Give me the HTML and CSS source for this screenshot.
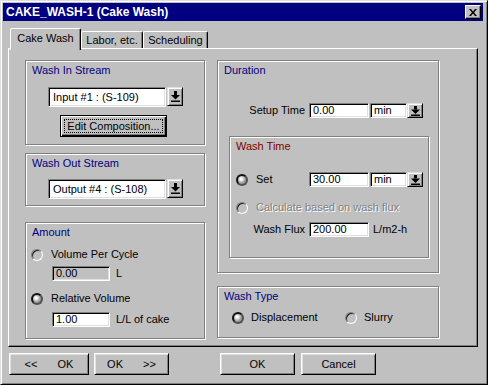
FILE: index.html
```html
<!DOCTYPE html>
<html>
<head>
<meta charset="utf-8">
<link rel="stylesheet" href="styles.css">
</head>
<body>
<div class="window">
  <div class="titlebar">
    <span class="title">CAKE_WASH-1 (Cake Wash)</span>
    <div class="close"><svg width="8" height="7" viewBox="0 0 8 7"><path d="M0,0h2l2,2.4l2,-2.4h2l-3,3.5l3,3.5h-2l-2,-2.4l-2,2.4h-2l3,-3.5z" fill="#000"/></svg></div>
  </div>
  <div class="tabs">
    <div class="tab active t1">Cake Wash</div>
    <div class="tab t2">Labor, etc.</div>
    <div class="tab t3">Scheduling</div>
  </div>
  <div class="panel">
    <div class="col col-left">
      <div class="group g-in">
        <div class="glabel">Wash In Stream</div>
        <div class="combo c-in">
          <div class="field wide">Input #1 : (S-109)</div>
          <div class="ddbtn big"><svg width="9" height="11" viewBox="0 0 9 11"><rect x="3" y="0" width="3" height="4" fill="#000"/><path d="M0,4h9l-4.5,4.5z" fill="#000"/><rect x="0" y="9.5" width="9" height="1.5" fill="#000"/></svg></div>
        </div>
        <div class="btn default editbtn"><span class="focus">Edit Composition...</span></div>
      </div>
      <div class="group g-out">
        <div class="glabel">Wash Out Stream</div>
        <div class="combo c-out">
          <div class="field wide">Output #4 : (S-108)</div>
          <div class="ddbtn big"><svg width="9" height="11" viewBox="0 0 9 11"><rect x="3" y="0" width="3" height="4" fill="#000"/><path d="M0,4h9l-4.5,4.5z" fill="#000"/><rect x="0" y="9.5" width="9" height="1.5" fill="#000"/></svg></div>
        </div>
      </div>
      <div class="group g-amt">
        <div class="glabel">Amount</div>
        <div class="rrow r1"><span class="radio"></span><span>Volume Per Cycle</span></div>
        <div class="frow f1"><div class="field small disabled">0.00</div><span>L</span></div>
        <div class="rrow r2"><span class="radio on"></span><span>Relative Volume</span></div>
        <div class="frow f2"><div class="field small">1.00</div><span>L/L of cake</span></div>
      </div>
    </div>
    <div class="col col-right">
      <div class="group g-dur">
        <div class="glabel">Duration</div>
        <div class="vrow setup">
          <span class="lbl lbl-setup">Setup Time</span>
          <div class="field num">0.00</div>
          <div class="field unit">min</div>
          <div class="ddbtn"><svg width="9" height="10" viewBox="0 0 9 10"><rect x="3" y="0" width="3" height="3.5" fill="#000"/><path d="M0,3.5h9l-4.5,4.5z" fill="#000"/><rect x="0" y="8.5" width="9" height="1.5" fill="#000"/></svg></div>
        </div>
        <div class="group g-time">
          <div class="glabel red">Wash Time</div>
          <div class="vrow setrow">
            <span class="radio on"></span>
            <span class="settxt">Set</span>
            <div class="field num">30.00</div>
            <div class="field unit">min</div>
            <div class="ddbtn"><svg width="9" height="10" viewBox="0 0 9 10"><rect x="3" y="0" width="3" height="3.5" fill="#000"/><path d="M0,3.5h9l-4.5,4.5z" fill="#000"/><rect x="0" y="8.5" width="9" height="1.5" fill="#000"/></svg></div>
          </div>
          <div class="rrow calc"><span class="radio"></span><span class="dis">Calculate based on wash flux</span></div>
          <div class="vrow flux">
            <span class="lbl lbl-flux">Wash Flux</span>
            <div class="field num">200.00</div>
            <span class="unit-txt">L/m2-h</span>
          </div>
        </div>
      </div>
      <div class="group g-type">
        <div class="glabel">Wash Type</div>
        <div class="rrow types">
          <span class="opt opt1"><span class="radio on"></span><span>Displacement</span></span>
          <span class="opt"><span class="radio"></span><span>Slurry</span></span>
        </div>
      </div>
    </div>
  </div>
  <div class="buttons">
    <div class="btn b1"><span>&lt;&lt;</span><span>OK</span></div>
    <div class="btn b2"><span>OK</span><span>&gt;&gt;</span></div>
    <div class="btn b3">OK</div>
    <div class="btn b4">Cancel</div>
  </div>
</div>
</body>
</html>
```
FILE: styles.css
```css
* { box-sizing: border-box; }
body {
  margin: 0;
  background: #c0c0c0;
  font-family: "Liberation Sans", Arial, sans-serif;
  font-size: 11px;
  line-height: 13px;
  color: #000;
}
.window {
  width: 488px;
  height: 385px;
  background: #c0c0c0;
  border: 1px solid;
  border-color: #dfdfdf #000 #000 #dfdfdf;
  box-shadow: inset 1px 1px #fff, inset -1px -1px #808080;
  padding: 2px;
}
.titlebar {
  height: 18px;
  background: #000080;
  margin-right: 2px;
  padding: 0 2px 0 3px;
  display: flex;
  align-items: center;
  justify-content: space-between;
}
.title { color: #fff; font-weight: bold; font-size: 12px; }
.close {
  width: 16px;
  height: 14px;
  background: #c0c0c0;
  border: 1px solid;
  border-color: #fff #000 #000 #fff;
  box-shadow: inset -1px -1px #808080;
  display: flex;
  align-items: center;
  justify-content: center;
}
.close svg { display: block; }

.tabs {
  display: flex;
  align-items: flex-end;
  height: 20px;
  margin: 7px 0 0 7px;
}
.tab {
  height: 17px;
  border: 1px solid;
  border-bottom: none;
  border-color: #fff #000 #000 #fff;
  box-shadow: inset -1px 0 #808080;
  border-radius: 2px 2px 0 0;
  text-align: center;
  padding-top: 2px;
  background: #c0c0c0;
}
.tab.active {
  height: 22px;
  margin-bottom: -2px;
  position: relative;
  z-index: 1;
  padding-top: 3px;
}
.t1 { width: 71px; }
.t2 { width: 62px; }
.t3 { width: 65px; }

.panel {
  width: 470px;
  height: 299px;
  margin-left: 5px;
  border: 1px solid;
  border-color: #fff #000 #000 #fff;
  box-shadow: inset -1px -1px #808080;
  padding: 11px 0 0 16px;
  display: flex;
  gap: 12px;
}
.col { display: flex; flex-direction: column; }
.col-left { width: 180px; }
.col-right { width: 222px; }

.group {
  border: 1px solid #808080;
  box-shadow: inset 1px 1px #fff, 1px 1px #fff;
  padding-top: 3px;
}
.glabel { color: #000080; padding-left: 6px; height: 13px; }
.glabel.red { color: #800000; }
.g-in { height: 85px; }
.g-out { height: 53px; margin-top: 8px; }
.g-amt { height: 117px; margin-top: 16px; }
.g-dur { height: 213px; }
.g-type { height: 52px; margin-top: 13px; }
.g-time { width: 200px; height: 122px; margin: 18px 0 0 11px; }

.field {
  background: #fff;
  border: 1px solid;
  border-color: #808080 #fff #fff #808080;
  box-shadow: inset 1px 1px #000, inset -1px -1px #dfdfdf;
  padding-left: 3px;
  display: flex;
  align-items: center;
  white-space: nowrap;
  overflow: hidden;
}
.field.disabled { background: #c0c0c0; }
.field.wide { width: 118px; height: 20px; padding-left: 4px; }
.field.small { width: 58px; height: 15px; }
.field.num { width: 60px; height: 15px; }
.field.unit { width: 37px; height: 15px; margin-left: 1px; }

.ddbtn {
  width: 16px;
  height: 15px;
  background: #c0c0c0;
  border: 1px solid;
  border-color: #dfdfdf #000 #000 #dfdfdf;
  box-shadow: inset 1px 1px #fff, inset -1px -1px #808080;
  display: flex;
  align-items: center;
  justify-content: center;
}
.ddbtn.big { height: 19px; }
.ddbtn svg { display: block; }

.combo { display: flex; gap: 1px; align-items: flex-start; margin-left: 22px; }
.c-in { margin-top: 10px; }
.c-out { margin-top: 9px; }

.btn {
  height: 22px;
  background: #c0c0c0;
  border: 1px solid;
  border-color: #fff #000 #000 #fff;
  box-shadow: inset 1px 1px #dfdfdf, inset -1px -1px #808080;
  display: flex;
  align-items: center;
  justify-content: center;
  gap: 20px;
}
.btn.default {
  border-color: #000;
  box-shadow: inset 1px 1px #fff, inset -1px -1px #000, inset -2px -2px #808080;
}
.editbtn { width: 107px; margin: 8px 0 0 34px; }
.focus {
  border: 1px dotted #000;
  height: 14px;
  padding: 0 2px;
  display: flex;
  align-items: center;
}

.radio {
  width: 12px;
  height: 12px;
  flex: none;
  border-radius: 50%;
  border: 1px solid;
  border-color: #808080 #fff #fff #808080;
  background: #c0c0c0;
  box-shadow: inset 1px 1px #202020;
}
.radio.on {
  border: 2px solid #202020;
  border-color: #101010 #505050 #505050 #101010;
  box-shadow: none;
  background: radial-gradient(circle at 40% 38%, #fff 0, #fff 1px, #b8b8b8 3px, #8c8c8c 5px);
}

.rrow { display: flex; align-items: center; height: 13px; gap: 8px; margin-left: 5px; }
.r1 { margin-top: 9px; }
.r2 { margin-top: 11px; }
.frow { display: flex; align-items: center; gap: 6px; margin-left: 26px; }
.f1 { margin-top: 5px; }
.f2 { margin-top: 7px; }

.vrow { display: flex; align-items: center; height: 15px; }
.setup { margin-top: 26px; }
.lbl { text-align: right; margin-right: 4px; flex: none; }
.lbl-setup { width: 87px; }
.lbl-flux { width: 75px; }
.setrow { margin: 19px 0 0 6px; }
.settxt { width: 61px; padding-left: 8px; flex: none; }
.calc { margin: 14px 0 0 6px; }
.dis { color: #808080; text-shadow: 1px 1px 0 #fff; }
.flux { margin-top: 8px; }
.unit-txt { margin-left: 4px; }

.types { margin: 8px 0 0 14px; gap: 0; }
.opt { display: flex; align-items: center; gap: 7px; }
.opt1 { width: 113px; }

.buttons { display: flex; margin-top: 6px; }
.b1 { width: 80px; margin-left: 6px; }
.b2 { width: 75px; margin-left: 5px; }
.b3 { width: 75px; margin-left: 51px; }
.b4 { width: 75px; margin-left: 6px; }
```
